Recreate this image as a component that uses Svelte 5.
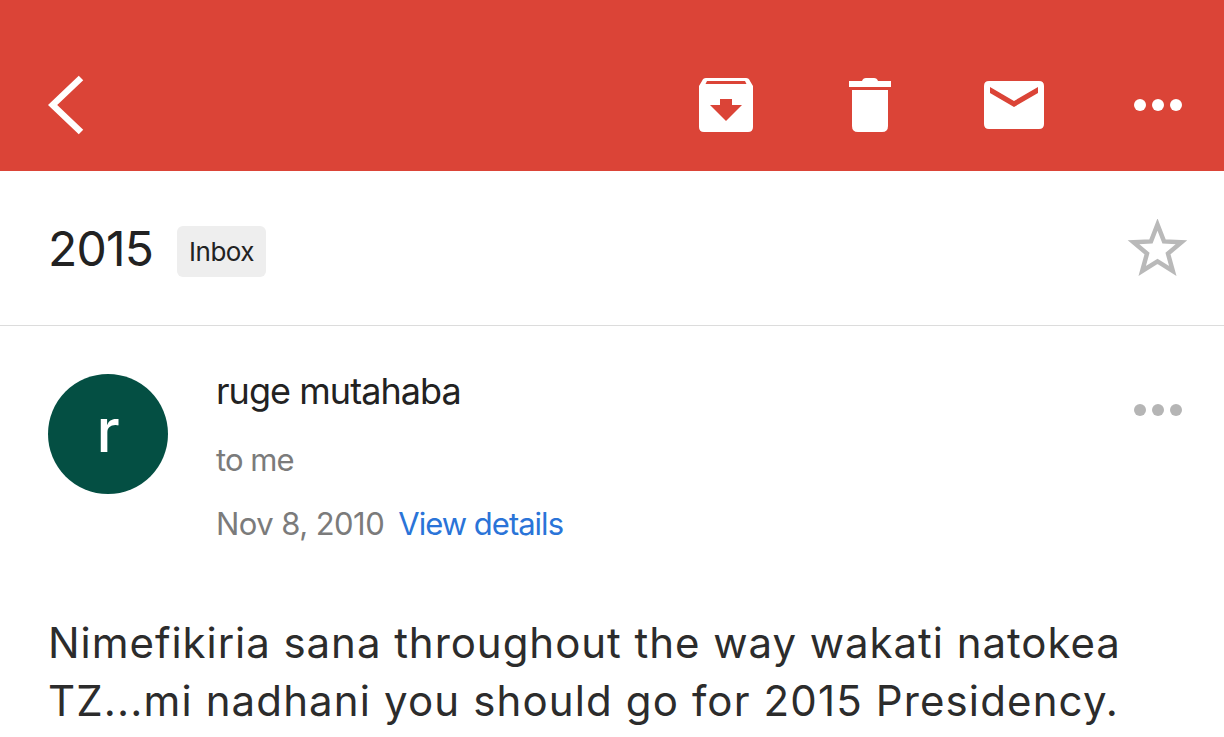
<script>
  const dots = [0, 1, 2];
</script>

<div class="page">
  <header class="bar">
    <svg class="back" width="36" height="60" viewBox="0 0 36 60"><path d="M33 3 L4.6 30 L33 57" fill="none" stroke="#fff" stroke-width="6.5"/></svg>
    <div class="actions">
      <svg class="archive" width="54" height="54" viewBox="0 0 54 54"><path fill="#fff" fill-rule="evenodd" d="M7 0H47Q50 0 51 3L54 8V49Q54 54 49 54H5Q0 54 0 49V8L3 3Q4 0 7 0ZM8 3L6.5 6H47.5L46 3ZM21 21V27H11L27 43L43 27H33V21Z"/></svg>
      <svg class="trash" width="42" height="54" viewBox="0 0 42 54"><path fill="#fff" d="M0 3H13Q14 0 17 0H25Q28 0 29 3H42V9H0ZM3 12H39V48Q39 54 33 54H9Q3 54 3 48Z"/></svg>
      <svg class="mail" width="60" height="48" viewBox="0 0 60 48"><path fill="#fff" fill-rule="evenodd" d="M5 0H55Q60 0 60 5V43Q60 48 55 48H5Q0 48 0 43V5Q0 0 5 0ZM6 6V12L30 26L54 12V6L30 20Z"/></svg>
      <div class="dots white">{#each dots as d}<span></span>{/each}</div>
    </div>
  </header>

  <section class="subject">
    <h1>2015</h1>
    <span class="tag">Inbox</span>
    <svg class="star" width="60" height="58" viewBox="0 0 60 58"><path d="M30.5 5.5 L37 22.4 L54.5 23.2 L41 34.6 L45.8 52 L30.5 42.3 L15.2 52 L20 34.6 L6.5 23.2 L24 22.4 Z" fill="none" stroke="#b9b9b9" stroke-width="4.5"/></svg>
  </section>

  <section class="meta">
    <div class="avatar">r</div>
    <div class="who">
      <div class="name">ruge mutahaba</div>
      <div class="to">to me</div>
      <div class="date">Nov 8, 2010 <a href="#details">View details</a></div>
    </div>
    <div class="dots grey">{#each dots as d}<span></span>{/each}</div>
  </section>

  <p class="body"><span class="l1">Nimefikiria sana throughout the way wakati natokea</span> <span class="l2">TZ...mi nadhani you should go for 2015 Presidency.</span></p>
</div>

<style>
  :global(body) { margin: 0; background: #fff; }
  .page { width: 1224px; height: 737px; overflow: hidden; font-family: Inter, "Liberation Sans", sans-serif; color: #222; }
  .bar { height: 171px; background: #db4437; display: flex; align-items: center; padding: 39px 42px 0 48px; box-sizing: border-box; }
  .back { flex: none; }
  .actions { margin-left: auto; display: flex; align-items: center; }
  .archive { margin-right: 96px; }
  .trash { margin-right: 93px; }
  .mail { margin-right: 90px; }
  .dots { display: flex; gap: 6px; }
  .dots span { width: 12px; height: 12px; border-radius: 50%; }
  .white span { background: #fff; }
  .grey span { background: #b5b5b5; }
  .subject { height: 155px; box-sizing: border-box; border-bottom: 1px solid #dcdcdc; display: flex; align-items: center; padding: 0 37px 0 48px; }
  h1 { margin: 0; font-size: 48px; font-weight: 400; letter-spacing: -0.8px; }
  .tag { margin-left: 24px; width: 89px; height: 51px; padding-top: 2px; box-sizing: border-box; background: #eee; border-radius: 6px; display: flex; align-items: center; justify-content: center; font-size: 26px; letter-spacing: -0.5px; margin-top: 6px; line-height: 1; }
  .star { margin-left: auto; }
  .meta { display: flex; padding: 48px 42px 0 48px; align-items: flex-start; }
  .avatar { width: 120px; height: 120px; border-radius: 50%; background: #044f43; color: #fff; font-size: 60px; font-weight: 500; display: flex; align-items: center; justify-content: center; flex: none; padding-bottom: 8px; box-sizing: border-box; }
  .who { margin-left: 48px; flex: 1; }
  .name { font-size: 36px; line-height: 40px; letter-spacing: -0.95px; margin-top: -3px; }
  .to { font-size: 31px; line-height: 36px; color: #7b7b7b; margin-top: 31px; letter-spacing: -0.95px; }
  .date { font-size: 31px; line-height: 36px; color: #7b7b7b; margin-top: 28px; letter-spacing: -0.55px; }
  a { color: #2a74d8; text-decoration: none; margin-left: 6px; letter-spacing: -1px; }
  .meta .dots { margin-top: 30px; }
  .body { margin: 72px 0 0 48px; width: 1110px; font-size: 42px; line-height: 58px; color: #2c2c2c; }
  .l1 { display: block; letter-spacing: 0.95px; }
  .l2 { display: block; letter-spacing: 1.13px; }
</style>
